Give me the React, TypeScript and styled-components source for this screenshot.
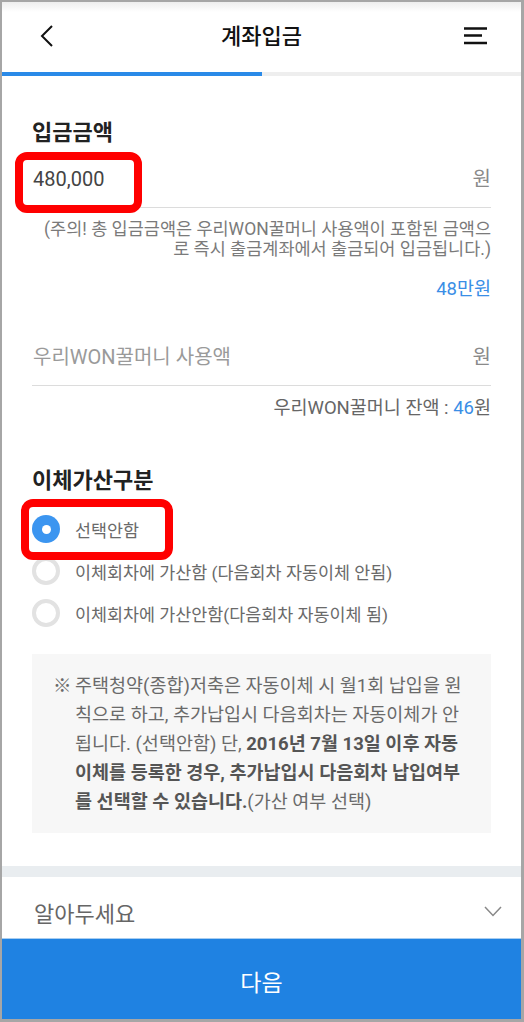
import React from "react";
import styled, { createGlobalStyle } from "styled-components";

const Global = createGlobalStyle`
  html, body { margin: 0; padding: 0; background: #fff; }
  * { box-sizing: border-box; }
  body { font-family: Roboto, "Noto Sans CJK KR", "Noto Sans", sans-serif; }
`;

const Frame = styled.div`
  position: relative;
  width: 524px;
  height: 1022px;
  border-style: solid;
  border-color: #a6a6a6;
  border-width: 2px 3px 3px 2px;
  display: flex;
  flex-direction: column;
  overflow: hidden;
  background: #fff;
`;

const Header = styled.header`
  height: 70px;
  flex: none;
  display: flex;
  align-items: center;
  justify-content: space-between;
  padding: 0 33px 0 33px;
  background: linear-gradient(#eeeeee 0px, #ffffff 10px);
`;

const IconButton = styled.button`
  border: 0;
  background: none;
  padding: 0;
  width: 24px;
  height: 24px;
  display: flex;
  align-items: center;
  justify-content: center;
  margin-top: -2px;
`;

const Title = styled.h1`
  margin: 0;
  font-size: 22px;
  font-weight: 500;
  color: #111;
  line-height: 28px;
`;

const Track = styled.div`
  height: 4px;
  flex: none;
  background: #eeeeee;
`;

const Fill = styled.div`
  height: 100%;
  background: #2a8ae8;
`;

const Main = styled.main`
  flex: 1;
  padding: 0 30px;
  display: flex;
  flex-direction: column;
`;

const SectionTitle = styled.h2<{ $top: number }>`
  margin: ${(p) => p.$top}px 0 0;
  font-size: 22px;
  line-height: 28px;
  font-weight: 700;
  color: #222;
`;

const InputRow = styled.div<{ $top: number }>`
  display: flex;
  justify-content: space-between;
  align-items: center;
  padding: ${(p) => p.$top}px 0 16px 1px;
  border-bottom: 1px solid #dcdcdc;
  font-size: 20px;
  line-height: 24px;
`;

const Value = styled.span<{ $placeholder?: boolean }>`
  color: ${(p) => (p.$placeholder ? "#9a9a9a" : "#444")};
`;

const Unit = styled.span`
  color: #8a8a8a;
`;

const Note = styled.p`
  margin: 12px 0 0;
  font-size: 17.5px;
  line-height: 19.5px;
  color: #7a7a7a;
  text-align: right;
  white-space: nowrap;
`;

const RightText = styled.div<{ $top: number }>`
  margin-top: ${(p) => p.$top}px;
  font-size: 18.5px;
  line-height: 22px;
  color: #666;
  text-align: right;
`;

const Blue = styled.span`
  color: #3a8ee6;
`;

const RadioGroup = styled.div`
  margin-top: 13px;
  display: flex;
  flex-direction: column;
`;

const RadioRow = styled.label`
  height: 42px;
  display: flex;
  align-items: center;
  gap: 15px;
  font-size: 17.4px;
  color: #6a6a6a;
`;

const RadioDot = styled.span<{ $checked?: boolean }>`
  width: 28px;
  height: 28px;
  border-radius: 50%;
  flex: none;
  display: flex;
  align-items: center;
  justify-content: center;
  background: ${(p) => (p.$checked ? "#3b95f0" : "#fff")};
  border: ${(p) => (p.$checked ? "none" : "4px solid #e2e2e2")};
  &::after {
    content: "";
    display: ${(p) => (p.$checked ? "block" : "none")};
    width: 9px;
    height: 9px;
    border-radius: 50%;
    background: #fff;
  }
`;

const InfoBox = styled.div`
  margin-top: 20px;
  height: 179px;
  background: #f7f7f7;
  padding: 18px 10px 16px 21px;
  display: flex;
  font-size: 18.5px;
  line-height: 29px;
  color: #6a6a6a;
`;

const Mark = styled.span`
  width: 22px;
  flex: none;
`;

const InfoText = styled.p`
  margin: 0;
  white-space: nowrap;
  b {
    color: #555;
    font-weight: 700;
  }
`;

const Divider = styled.div`
  height: 11px;
  flex: none;
  background: #e9edf0;
`;

const Accordion = styled.div`
  height: 61px;
  flex: none;
  display: flex;
  align-items: center;
  justify-content: space-between;
  padding: 8px 19px 0 32px;
  font-size: 22px;
  color: #666;
`;

const NextButton = styled.button`
  height: 81px;
  flex: none;
  border: 0;
  border-top: 1px solid #a8cdf0;
  background: #1f82e2;
  color: #fff;
  font-family: inherit;
  font-size: 23px;
  padding: 4px 0 0;
`;

const Highlight = styled.div<{ $x: number; $y: number; $w: number; $h: number }>`
  position: absolute;
  left: ${(p) => p.$x}px;
  top: ${(p) => p.$y}px;
  width: ${(p) => p.$w}px;
  height: ${(p) => p.$h}px;
  border: 8px solid #ff0000;
  border-radius: 12px;
  pointer-events: none;
`;

export default function App() {
  const progress = 260;
  return (
    <>
      <Global />
      <Frame>
        <Header>
          <IconButton aria-label="뒤로">
            <svg width="14" height="22" viewBox="0 0 14 22">
              <path d="M12 1 L2 11 L12 21" fill="none" stroke="#111" strokeWidth="2" />
            </svg>
          </IconButton>
          <Title>계좌입금</Title>
          <IconButton aria-label="메뉴">
            <svg width="24" height="18" viewBox="0 0 24 18">
              <path d="M0 1.5 H23 M0 8.5 H18 M0 16 H23" stroke="#111" strokeWidth="2.4" fill="none" />
            </svg>
          </IconButton>
        </Header>
        <Track>
          <Fill style={{ width: progress }} />
        </Track>
        <Main>
          <SectionTitle $top={43}>입금금액</SectionTitle>
          <InputRow $top={20}>
            <Value>480,000</Value>
            <Unit>원</Unit>
          </InputRow>
          <Note>
            (주의! 총 입금금액은 우리WON꿀머니 사용액이 포함된 금액으
            <br />로 즉시 출금계좌에서 출금되어 입금됩니다.)
          </Note>
          <RightText $top={19}>
            <Blue>48만원</Blue>
          </RightText>
          <InputRow $top={45}>
            <Value $placeholder>우리WON꿀머니 사용액</Value>
            <Unit>원</Unit>
          </InputRow>
          <RightText $top={11}>
            우리WON꿀머니 잔액 : <Blue>46</Blue>원
          </RightText>
          <SectionTitle $top={48}>이체가산구분</SectionTitle>
          <RadioGroup>
            <RadioRow>
              <RadioDot $checked />
              선택안함
            </RadioRow>
            <RadioRow>
              <RadioDot />
              이체회차에 가산함 (다음회차 자동이체 안됨)
            </RadioRow>
            <RadioRow>
              <RadioDot />
              이체회차에 가산안함(다음회차 자동이체 됨)
            </RadioRow>
          </RadioGroup>
          <InfoBox>
            <Mark>※</Mark>
            <InfoText>
              주택청약(종합)저축은 자동이체 시 월1회 납입을 원
              <br />
              칙으로 하고, 추가납입시 다음회차는 자동이체가 안
              <br />
              됩니다. (선택안함) 단, <b>2016년 7월 13일 이후 자동</b>
              <br />
              <b>이체를 등록한 경우, 추가납입시 다음회차 납입여부</b>
              <br />
              <b>를 선택할 수 있습니다.</b>(가산 여부 선택)
            </InfoText>
          </InfoBox>
        </Main>
        <Divider />
        <Accordion>
          <span>알아두세요</span>
          <svg width="18" height="11" viewBox="0 0 18 11">
            <path d="M1 1 L9 9.5 L17 1" fill="none" stroke="#888" strokeWidth="1.5" />
          </svg>
        </Accordion>
        <NextButton>다음</NextButton>
        <Highlight $x={13} $y={150} $w={127} $h={61} />
        <Highlight $x={19} $y={497} $w={152} $h={61} />
      </Frame>
    </>
  );
}
